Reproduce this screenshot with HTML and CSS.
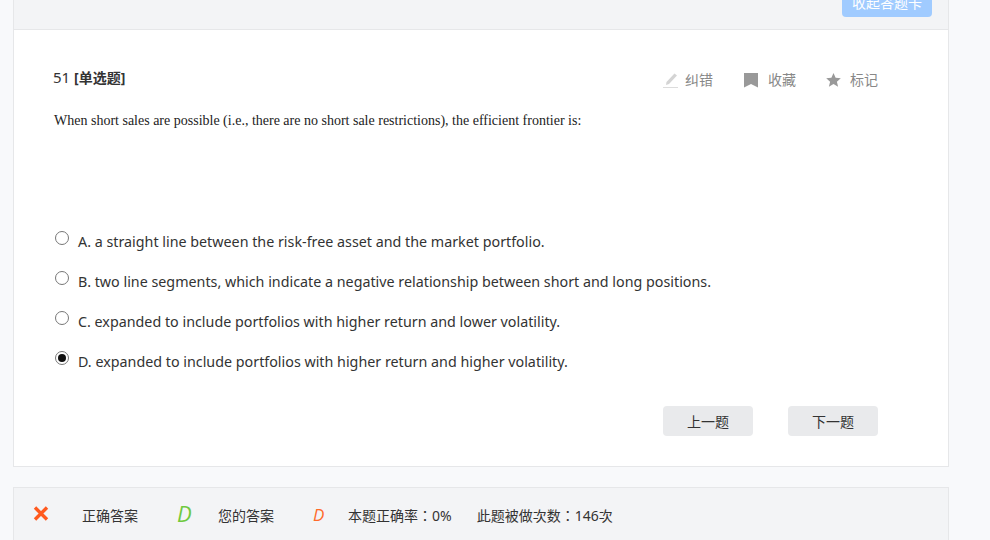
FILE: index.html
```html
<!DOCTYPE html>
<html lang="zh">
<head>
<meta charset="utf-8">
<title>51 [单选题]</title>
<link rel="stylesheet" href="styles.css">
</head>
<body>
<div class="page">
  <div class="topbar"><button class="collapse">收起答题卡</button></div>
  <section class="card">
    <div class="head">
      <div class="qno">51 <b>[单选题]</b></div>
      <div class="tools">
        <span class="tool t1"><svg class="ico" width="16" height="16" viewBox="0 0 16 16"><path d="M3.5 10 11.5 1.5 14 3.5 6 12 3 13Z" fill="#d4d4d4"/><rect x="0" y="15" width="15" height="1" fill="#dcdcdc"/></svg>纠错</span>
        <span class="tool t2"><svg class="ico" width="14" height="15" viewBox="0 0 14 15"><path d="M0 0H14V14.5L7 11 0 14.5Z" fill="#999"/></svg>收藏</span>
        <span class="tool t3"><svg class="ico" width="15" height="14" viewBox="0 0 15 14"><path d="M7.5 0 9.6 4.8 14.8 5.3 10.9 8.7 12.1 13.8 7.5 11.1 2.9 13.8 4.1 8.7 .2 5.3 5.4 4.8Z" fill="#999"/></svg>标记</span>
      </div>
    </div>
    <p class="stem">When short sales are possible (i.e., there are no short sale restrictions), the efficient frontier is:</p>
    <ul class="options">
      <li class="opt"><span class="radio"></span>A. a straight line between the risk-free asset and the market portfolio.</li>
      <li class="opt"><span class="radio"></span>B. two line segments, which indicate a negative relationship between short and long positions.</li>
      <li class="opt"><span class="radio"></span>C. expanded to include portfolios with higher return and lower volatility.</li>
      <li class="opt"><span class="radio on"></span>D. expanded to include portfolios with higher return and higher volatility.</li>
    </ul>
    <div class="nav">
      <button class="navbtn">上一题</button>
      <button class="navbtn">下一题</button>
    </div>
  </section>
  <section class="result">
    <svg class="wrong" width="16" height="15" viewBox="0 0 16 15"><path d="M2 1.5 14 13.5M14 1.5 2 13.5" stroke="#ff5a1f" stroke-width="3.4" fill="none"/></svg>
    <span class="lab1">正确答案</span>
    <i class="right-ans">D</i>
    <span class="lab2">您的答案</span>
    <i class="your-ans">D</i>
    <span class="lab3" lang="zh-Hant">本题正确率：0%</span>
    <span class="lab4" lang="zh-Hant">此题被做次数：146次</span>
  </section>
</div>
</body>
</html>
```
FILE: styles.css
```css
* { box-sizing: border-box; }
html, body { margin: 0; height: 540px; overflow: hidden; }
body { background: #f8f9fb; font-family: "Noto Sans", "Noto Sans CJK SC", sans-serif; color: #333; }
.page { width: 936px; margin-left: 13px; }
.topbar { height: 30px; background: #f3f4f6; border: 1px solid #e6e7e9; border-width: 0 1px 1px; display: flex; justify-content: flex-end; align-items: flex-start; padding-right: 16px; }
.collapse { width: 90px; height: 30px; margin-top: -13px; padding: 1px 0 0; border: 0; border-radius: 4px; background: #a0cbff; color: #fff; font: 14px/30px "Noto Sans", "Noto Sans CJK SC", sans-serif; }
.card { height: 437px; background: #fff; border: 1px solid #e6e7e9; border-top: 0; padding: 38px 70px 0 40px; }
.head { display: flex; justify-content: space-between; align-items: flex-start; }
.qno { font: 15px/20px "Noto Sans", "Noto Sans CJK SC", sans-serif; color: #333; margin: -1px 0 0 -1px; }
.qno b { font-weight: 700; font-size: 14px; }
.tools { display: flex; gap: 30px; margin-top: 2px; }
.tool { display: flex; align-items: center; color: #888; font-size: 14px; line-height: 20px; }
.ico { margin-right: 6px; }
.t1 { margin-right: 1px; }
.t2 .ico { margin-right: 10px; }
.t3 .ico { margin-right: 9px; }
.stem { margin: 21px 0 0; font: 14px/20px "Liberation Serif", "Noto Sans CJK SC", serif; color: #222; }
.options { list-style: none; margin: 91px 0 0; padding: 0; }
.opt { display: flex; align-items: center; height: 40px; font-size: 14.3px; line-height: 40px; color: #333; }
.radio { flex: none; width: 14px; height: 14px; border: 1px solid #777; border-radius: 50%; margin: -8px 9px 0 1px; background: #fff; position: relative; }
.radio.on::after { content: ""; position: absolute; left: 2px; top: 2px; width: 8px; height: 8px; border-radius: 50%; background: #111; }
.nav { display: flex; justify-content: flex-end; gap: 35px; margin-top: 24px; }
.navbtn { width: 90px; height: 30px; padding: 1px 0 0; border: 0; border-radius: 4px; background: #e9eaec; color: #333; font: 14px/30px "Noto Sans", "Noto Sans CJK SC", sans-serif; }
.result { height: 60px; margin-top: 20px; background: #f3f4f6; border: 1px solid #e6e7e9; display: flex; align-items: flex-start; padding: 18px 0 0 19px; font-size: 14px; line-height: 20px; color: #333; }
.wrong { margin-right: 33px; }
.lab1 { margin-right: 39px; }
.right-ans { font: italic 22px/20px "Open Sans", sans-serif; color: #6fc93e; margin: -3px 25px 0 0; width: 16px; }
.lab2 { margin-right: 39px; }
.your-ans { font: italic 17px/20px "Open Sans", sans-serif; color: #ff6a2a; width: 12px; margin: -1px 23px 0 0; }
.lab3, .lab4 { font-family: "Noto Sans", "Noto Sans CJK TC", sans-serif; }
.lab3 { margin-right: 25px; }
```
